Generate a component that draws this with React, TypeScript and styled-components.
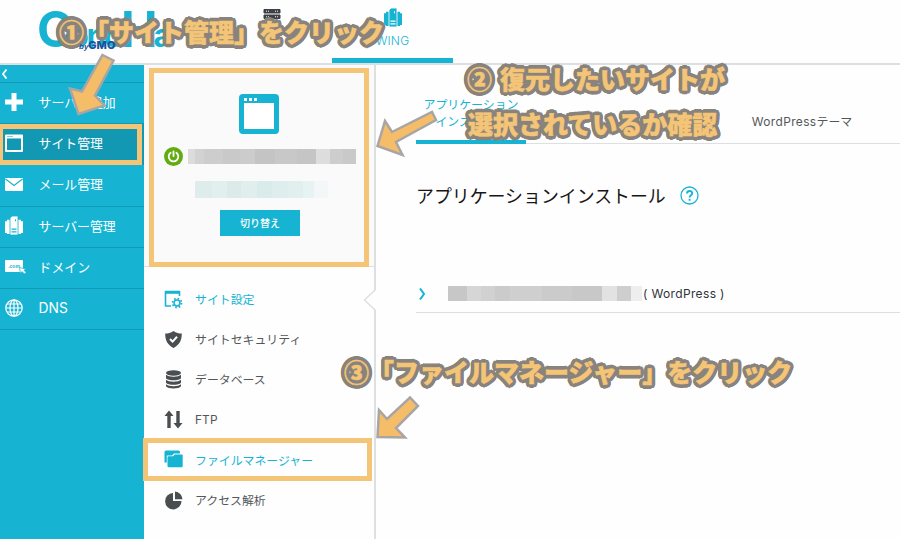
import React from "react";
import styled, { createGlobalStyle, css } from "styled-components";

const CYAN = "#16b4d2";
const ORANGE = "#f5c577";
const LINE = "#dedfe1";
const JP = `"Noto Sans CJK JP", sans-serif`;

const GlobalStyle = createGlobalStyle`
  *, *::before, *::after { box-sizing: border-box; }
  body { margin: 0; background: #fefefe; font-family: ${JP}; overflow: hidden; }
  svg { display: block; flex: none; }
`;

const Page = styled.div`
  position: relative;
  width: 900px;
  height: 539px;
  overflow: hidden;
  display: flex;
  flex-direction: column;
`;

const Header = styled.header`
  height: 65px;
  flex: none;
  display: flex;
  border-bottom: 2px solid ${LINE};
  padding-left: 37px;
`;

const Logo = styled.div`
  width: 174px;
  height: 63px;
  display: flex;
  flex-direction: column;
  font: 700 49px/60px Inter, sans-serif;
  letter-spacing: -4px;
  color: ${CYAN};
  white-space: nowrap;
`;

const LogoWord = styled.span`
  height: 39px;
  small { font-size: 32px; letter-spacing: -2.5px; }
`;

const LogoByline = styled.span`
  padding-left: 42px;
  z-index: 1;
  font: italic 700 8px/12px "Liberation Sans", sans-serif;
  letter-spacing: 0;
  color: #1d4f9c;
  b { font: 800 11px/12px Inter, sans-serif; }
`;

const NavItem = styled.div<{ $active?: boolean }>`
  width: 121px;
  height: 63px;
  display: flex;
  flex-direction: column;
  align-items: center;
  padding-top: 8px;
  gap: 5px;
  color: ${(p) => (p.$active ? CYAN : "#3d4145")};
  border-bottom: ${(p) => (p.$active ? `5px solid ${CYAN}` : "0")};
  font: 300 12px/18px Inter, sans-serif;
  letter-spacing: 0.2px;
`;

const Body = styled.div`
  flex: 1;
  min-height: 0;
  display: flex;
`;

const Sidebar = styled.nav`
  width: 144px;
  flex: none;
  background: ${CYAN};
  color: #fff;
`;

const Collapse = styled.div`
  height: 18px;
  padding: 4px 0 0 1px;
  border-bottom: 1px solid #1199b6;
`;

const highlight = css`
  &::after {
    content: "";
    position: absolute;
    border: 5px solid ${ORANGE};
  }
`;

const SideItem = styled.div<{ $active?: boolean }>`
  position: relative;
  height: 41.2px;
  display: flex;
  align-items: center;
  gap: 12px;
  padding: 0 0 2px 5px;
  border-bottom: 1px solid #1199b6;
  background: ${(p) => (p.$active ? "#1398b3" : "transparent")};
  font-size: 12.9px;
  line-height: 18px;
  white-space: nowrap;
  ${(p) => p.$active && highlight}
  &::after { left: -2px; top: 0; width: 144px; height: 41px; }
`;

const SideIcon = styled.span`
  width: 21.5px;
  height: 20px;
  display: flex;
  align-items: center;
`;

const Panel = styled.aside`
  width: 232px;
  flex: none;
  border-right: 2px solid ${LINE};
`;

const SiteCard = styled.section`
  position: relative;
  height: 202px;
  padding-top: 29px;
  display: flex;
  flex-direction: column;
  align-items: center;
  background: #fafafa;
  border-bottom: 1px solid ${LINE};
  color: ${CYAN};
  ${highlight}
  &::after { left: 5px; top: 3px; width: 220px; height: 199px; }
`;

const SiteName = styled.div`
  width: 100%;
  height: 20px;
  margin-top: 12px;
  display: flex;
  align-items: center;
  gap: 5px;
  padding-left: 20px;
`;

const Mosaic = styled.div`
  display: flex;
`;

const Tile = styled.i<{ $w: number; $h: number; $c: string }>`
  width: ${(p) => p.$w}px;
  height: ${(p) => p.$h}px;
  background: ${(p) => p.$c};
`;

const DomainSlot = styled.div`
  margin: 15px 0 12px 5px;
`;

const SwitchButton = styled.button`
  width: 80px;
  height: 26px;
  margin-left: 2px;
  padding: 0 0 1px;
  border: 0;
  background: ${CYAN};
  color: #fff;
  font: 500 10px/16px ${JP};
`;

const Menu = styled.div`
  padding-top: 12px;
`;

const MenuItem = styled.div<{ $tone?: "active" | "marked" }>`
  position: relative;
  height: 40.2px;
  display: flex;
  align-items: center;
  gap: 12px;
  padding-left: 20px;
  color: ${(p) => (p.$tone ? CYAN : "#53575a")};
  font-size: 11.9px;
  line-height: 18px;
  white-space: nowrap;
  ${(p) => p.$tone === "marked" && highlight}
  &::after { left: -1px; top: -2px; width: 229px; height: 43px; }
`;

const Notch = styled.svg`
  position: absolute;
  right: -2px;
  top: 10px;
`;

const Main = styled.main`
  flex: 1;
  min-width: 0;
  padding-left: 40px;
`;

const Tabs = styled.div`
  height: 79px;
  display: flex;
  align-items: stretch;
  justify-content: space-between;
  padding-right: 43px;
  border-bottom: 1px solid ${LINE};
`;

const Tab = styled.div<{ $active?: boolean }>`
  width: 110px;
  margin-bottom: -1px;
  padding-top: ${(p) => (p.$active ? 31 : 48)}px;
  text-align: center;
  white-space: nowrap;
  font-family: Inter, ${JP};
  font-size: 11.9px;
  line-height: 17px;
  color: ${(p) => (p.$active ? CYAN : "#53575a")};
  border-bottom: ${(p) => (p.$active ? `4px solid ${CYAN}` : "0")};
`;

const Latin = styled.span`
  font-family: Inter, sans-serif;
  letter-spacing: 0.4px;
`;

const MenuLatin = styled(Latin)`
  letter-spacing: 0.1px;
`;

const SideLatin = styled(MenuLatin)`
  font-size: 13.8px;
`;

const TitleRow = styled.div`
  display: flex;
  align-items: center;
  gap: 14px;
  margin-top: 38px;
  height: 27px;
`;

const Title = styled.h1`
  margin: 0;
  font-weight: 400;
  font-size: 17.9px;
  line-height: 27px;
  color: #161616;
`;

const AppRow = styled.div`
  margin-top: 65px;
  height: 39px;
  display: flex;
  align-items: center;
  padding: 1px 0 0 2px;
  border-bottom: 1px solid ${LINE};
  font: 400 12px/18px Inter, sans-serif;
  letter-spacing: 0.35px;
  color: #303336;
  white-space: nowrap;
  svg { margin-right: 22px; }
  span { padding-left: 1px; }
`;

const outline = Array.from({ length: 24 }, (_, i) => {
  const a = (i / 24) * Math.PI * 2;
  return `${(Math.cos(a) * 3.6).toFixed(2)}px ${(Math.sin(a) * 3.6).toFixed(2)}px 0 #88837c`;
}).join(", ");

const Note = styled.div<{ $x: number; $y: number }>`
  position: absolute;
  left: ${(p) => p.$x}px;
  top: ${(p) => p.$y}px;
  font: 900 25px/36px ${JP};
  color: ${ORANGE};
  -webkit-text-stroke: 0.5px ${ORANGE};
  text-shadow: ${outline};
  white-space: nowrap;
`;

const NoteGap = styled.span`
  display: inline-block;
  width: 8px;
`;

const Arrows = styled.svg`
  position: absolute;
  left: 0;
  top: 0;
  pointer-events: none;
`;

const WindowIcon = ({ size }: { size: number }) => (
  <svg width={size} height={size} viewBox="0 0 40 40">
    <rect width="40" height="40" rx="4" fill="currentColor" />
    <path d="M5 9h30v26H5z" fill="#fff" />
    <path d="M5 4h3v3H5zM10 4h3v3h-3zM15 4h3v3h-3z" fill="#fff" />
  </svg>
);

const SideWindowIcon = () => (
  <svg width="18" height="18" viewBox="0 0 18 18" fill="none" stroke="#fff">
    <path d="M1 1.500h16v15.500H1z" strokeWidth="2" strokeLinejoin="round" />
    <path d="M1 3.200h16" strokeWidth="2.500" />
    <path d="M2.500 2.500h5" stroke="#1398b3" strokeDasharray="1 1" />
  </svg>
);

const PlusIcon = () => (
  <svg width="18" height="18" viewBox="0 0 18 18">
    <path d="M9 0v18M0 9h18" stroke="#fff" strokeWidth="5" />
  </svg>
);

const MailIcon = () => (
  <svg width="18" height="13" viewBox="0 0 18 13">
    <rect width="18" height="13" rx="1" fill="#fff" />
    <path d="M0.500 1l8.500 6.500L17.500 1" fill="none" stroke={CYAN} strokeWidth="1.200" />
  </svg>
);

const ServersIcon = ({ gap }: { gap: string }) => (
  <svg width="18" height="19" viewBox="0 0 18 18" preserveAspectRatio="none" fill="currentColor">
    <path d="M0 5h3v11H0zM15 5h3v11h-3zM2 3.500h3v13.500H2zM13 3.500h3v13.500h-3z" />
    <path d="M7 0h6v18H5V2z" stroke={gap} strokeWidth="0.800" />
    <path d="M6.500 12.500h5M6.500 15h5" stroke={gap} strokeWidth="1.200" />
    <path d="M10.500 3v2" stroke={gap} />
  </svg>
);

const DomainIcon = () => (
  <svg width="22" height="15" viewBox="0 0 22 15">
    <rect y="1" width="18" height="12" rx="1" fill="#fff" />
    <text x="9" y="8.500" fontSize="5" fontWeight="700" textAnchor="middle" fill={CYAN} fontFamily="Liberation Sans">.com</text>
    <path d="M14.500 8.500l6.500 1.500-2 1.200 2 2.300-1.500 1.500-2.500-2.500-1.500 2z" fill="#fff" stroke={CYAN} strokeWidth="0.700" />
  </svg>
);

const GlobeIcon = () => (
  <svg width="18" height="18" viewBox="0 0 18 18" fill="none" stroke="#fff" strokeWidth="1.200">
    <circle cx="9" cy="9" r="8.200" />
    <ellipse cx="9" cy="9" rx="4" ry="8.200" />
    <path d="M9 1v16M1 9h16M2 5h14M2 13h14" />
  </svg>
);

const RackIcon = () => (
  <svg width="18" height="18" viewBox="0 0 18 18">
    <path d="M1 1.500h16v3.500H1zM1 7h16v3.500H1zM1 12.500h16V16H1z" fill="currentColor" stroke="currentColor" strokeLinejoin="round" />
    <path d="M3 3.200h3M3 8.800h3M12 3.200h3M12 8.800h3" stroke="#fff" strokeDasharray="1 1" />
  </svg>
);

const PowerIcon = () => (
  <svg width="19" height="19" viewBox="0 0 19 19" fill="none" stroke="#fff" strokeWidth="1.800" strokeLinecap="round">
    <circle cx="9.500" cy="9.500" r="9.500" fill="#62ac12" stroke="none" />
    <path d="M9.500 4.500v4.500M6.600 5.800a4.800 4.800 0 1 0 5.800 0" />
  </svg>
);

const SettingsIcon = () => (
  <svg width="19" height="19" viewBox="0 0 19 19" fill="none" stroke="currentColor">
    <path d="M7 16H1.500V1.500h14V6" strokeWidth="1.600" strokeLinejoin="round" />
    <path d="M1 2.500h15" strokeWidth="2.600" />
    <circle cx="13" cy="13" r="2.900" strokeWidth="1.500" />
    <circle cx="13" cy="13" r="4.500" strokeWidth="1.800" strokeDasharray="1.600 1.934" />
  </svg>
);

const ShieldIcon = () => (
  <svg width="19" height="19" viewBox="0 0 19 19">
    <path d="M9.500 1C7 3 4 3.600 1.200 3.600c0 7 2.300 11.400 8.300 14.400 6-3 8.300-7.400 8.300-14.400C15 3.600 12 3 9.500 1z" fill="#4a4e51" />
    <path d="M6 9l2.600 2.600L13 6.800" fill="none" stroke="#fff" strokeWidth="2" />
  </svg>
);

const DatabaseIcon = () => (
  <svg width="19" height="19" viewBox="0 0 19 19" fill="#4a4e51">
    <ellipse cx="9.500" cy="3" rx="7.500" ry="2.700" />
    <path d="M2 4.800c2.500 2.500 12.500 2.500 15 0v3.500c-2 2.700-13 2.700-15 0zM2 9.800c2.500 2.500 12.500 2.500 15 0v3c-2 2.700-13 2.700-15 0zM2 14.300c2.500 2.500 12.500 2.500 15 0v2c-2 3-13 3-15 0z" />
  </svg>
);

const TransferIcon = () => (
  <svg width="19" height="19" viewBox="0 0 19 19" fill="#4a4e51">
    <path d="M5 0.500l4.500 5.500H6.700v12H3.300V6H0.500zM14 18.500L9.500 13h2.800V1h3.400v12h2.800z" />
  </svg>
);

const FoldersIcon = () => (
  <svg width="19" height="19" viewBox="0 0 19 19" fill="currentColor">
    <path d="M0.500 12.500V2Q0.500 0.500 2 0.500h12.500Q16 0.500 16 2v1.500H10L8 5.500H2.800v7z" />
    <path d="M3.500 16V7Q3.500 6.300 4.500 6.300H9l1.800-1.800H18q0.700 0 0.700 0.700V16q0 1.200-1.200 1.200H5Q3.500 17.200 3.500 16z" />
  </svg>
);

const PieIcon = () => (
  <svg width="19" height="19" viewBox="0 0 19 19" fill="#4a4e51">
    <path d="M9 2v8h8.500A8.200 8.200 0 1 1 9 2z" />
    <path d="M11 0.500a8 8 0 0 1 7.500 7.700H11z" />
  </svg>
);

const HelpIcon = () => (
  <svg width="19" height="19" viewBox="0 0 19 19" fill="none" stroke={CYAN}>
    <circle cx="9.500" cy="9.500" r="8.500" strokeWidth="1.300" />
    <path d="M7 7.500c0-3.300 5.200-3.200 5.200-.300 0 2-2.600 2-2.600 4.300M9.600 12.800v2" strokeWidth="1.900" />
  </svg>
);

const sideItems = [
  { label: "サーバー追加", icon: <PlusIcon /> },
  { label: "サイト管理", icon: <SideWindowIcon />, active: true },
  { label: "メール管理", icon: <MailIcon /> },
  { label: "サーバー管理", icon: <ServersIcon gap={CYAN} /> },
  { label: "ドメイン", icon: <DomainIcon /> },
  { label: <SideLatin>DNS</SideLatin>, icon: <GlobeIcon /> },
];

const menuItems: { label: React.ReactNode; icon: React.ReactNode; tone?: "active" | "marked" }[] = [
  { label: "サイト設定", icon: <SettingsIcon />, tone: "active" },
  { label: "サイトセキュリティ", icon: <ShieldIcon /> },
  { label: "データベース", icon: <DatabaseIcon /> },
  { label: <MenuLatin>FTP</MenuLatin>, icon: <TransferIcon /> },
  { label: "ファイルマネージャー", icon: <FoldersIcon />, tone: "marked" },
  { label: "アクセス解析", icon: <PieIcon /> },
];

const nameTiles: [number, string][] = [
  [7, "#dcdcdc"], [9, "#d2d2d2"], [19, "#cdcdcd"], [17, "#c9c9c9"], [15, "#cccccc"], [20, "#c4c4c4"],
  [22, "#c8c8c8"], [19, "#c5c5c5"], [14, "#dddddd"], [13, "#cdcdcd"], [13, "#c9c9c9"],
];
const domainTiles: [number, string][] = [
  [17, "#deecec"], [15, "#e2efef"], [14, "#dcebea"], [16, "#e0eeed"], [15, "#d9ebea"],
  [16, "#deeeee"], [15, "#e1efee"], [11, "#e6f3f2"], [14, "#f3f7f7"],
];
const appTiles: [number, string][] = [
  [19, "#c7c7c7"], [14, "#d6d6d6"], [14, "#d1d1d1"], [15, "#cbcbcb"], [32, "#cfcfcf"], [30, "#cbcbcb"],
  [30, "#c8c8c8"], [15, "#e2e2e2"], [14, "#cecece"], [11, "#eeeeee"],
];

const MosaicBar = ({ tiles, height }: { tiles: [number, string][]; height: number }) => (
  <Mosaic>
    {tiles.map(([w, c], i) => (
      <Tile key={i} $w={w} $h={height} $c={c} />
    ))}
  </Mosaic>
);

export default function App() {
  return (
    <>
      <GlobalStyle />
      <Page>
        <Header>
          <Logo>
            <LogoWord>C<small>ono</small>H<small>a</small></LogoWord>
            <LogoByline>by<b>GMO</b></LogoByline>
          </Logo>
          <NavItem><RackIcon /></NavItem>
          <NavItem $active>
            <ServersIcon gap="#fff" />
            WING
          </NavItem>
        </Header>
        <Body>
          <Sidebar>
            <Collapse>
              <svg width="7" height="10" viewBox="0 0 7 10">
                <path d="M5.500 0.500L2 5l3.500 4.500" fill="none" stroke="#fff" strokeWidth="1.800" />
              </svg>
            </Collapse>
            {sideItems.map((item, i) => (
              <SideItem key={i} $active={item.active}>
                <SideIcon>{item.icon}</SideIcon>
                {item.label}
              </SideItem>
            ))}
          </Sidebar>
          <Panel>
            <SiteCard>
              <WindowIcon size={40} />
              <SiteName>
                <PowerIcon />
                <MosaicBar tiles={nameTiles} height={15} />
              </SiteName>
              <DomainSlot><MosaicBar tiles={domainTiles} height={17} /></DomainSlot>
              <SwitchButton>切り替え</SwitchButton>
            </SiteCard>
            <Menu>
              {menuItems.map((item, i) => (
                <MenuItem key={i} $tone={item.tone}>
                  {item.icon}
                  {item.label}
                  {item.tone === "active" && (
                    <Notch width="13" height="22" viewBox="0 0 13 22">
                      <path d="M13 1L1.500 11 13 21z" fill="#fefefe" />
                      <path d="M12 1L1.500 11 12 21" fill="none" stroke={LINE} strokeWidth="1.500" />
                    </Notch>
                  )}
                </MenuItem>
              ))}
            </Menu>
          </Panel>
          <Main>
            <Tabs>
              <Tab $active>アプリケーション<br />インストール</Tab>
              <Tab><Latin>WordPress</Latin>テーマ</Tab>
            </Tabs>
            <TitleRow>
              <Title>アプリケーションインストール</Title>
              <HelpIcon />
            </TitleRow>
            <AppRow>
              <svg width="8" height="12" viewBox="0 0 8 12">
                <path d="M2 0.500L6 6l-4 5.500" fill="none" stroke={CYAN} strokeWidth="2" />
              </svg>
              <MosaicBar tiles={appTiles} height={15} />
              <span>( WordPress )</span>
            </AppRow>
          </Main>
        </Body>
        <Note $x={59} $y={13}>①「サイト管理」をクリック</Note>
        <Note $x={467} $y={60}>②<NoteGap />復元したいサイトが</Note>
        <Note $x={468} $y={105}>選択されているか確認</Note>
        <Note $x={344} $y={353}>③「ファイルマネージャー」をクリック</Note>
        <Arrows width="900" height="539" viewBox="0 0 900 539" fill="#f6bd69" stroke="#aaa5a5" strokeWidth="2.500">
          <path d="M102.500 55L113.500 60.500 95 95.500 104.500 105.500 78.500 114 70 88.500 82 91.500z" />
          <path d="M377.500 146L385 121 392 132 432 112 436 120 396 142 402.500 155z" />
          <path d="M377.500 437L379 410 387 419 410 397.500 418 406 396 428 405 437.500z" />
        </Arrows>
      </Page>
    </>
  );
}
